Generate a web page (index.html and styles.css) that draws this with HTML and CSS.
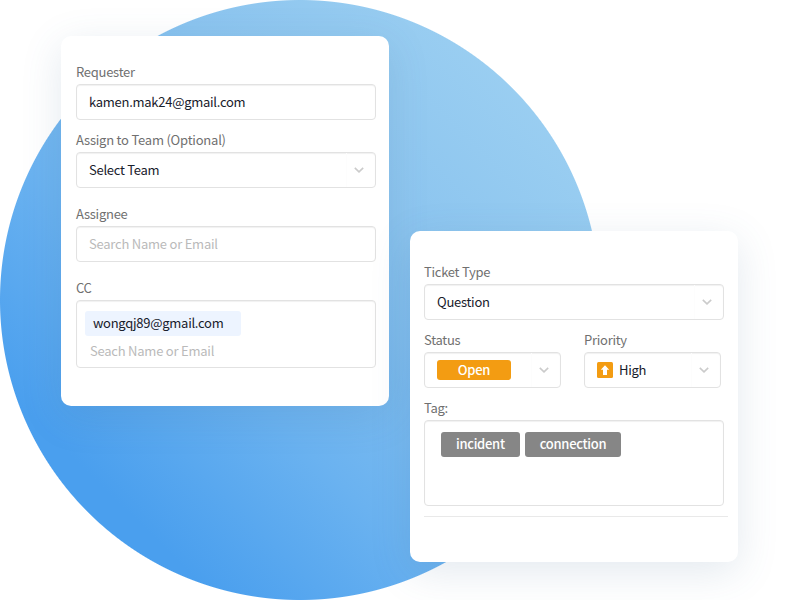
FILE: index.html
```html
<!DOCTYPE html>
<html lang="en">
<head>
<meta charset="utf-8">
<title>Ticket form</title>
<link rel="stylesheet" href="styles.css">
</head>
<body>
<main class="scene">
  <section class="card requester-card">
    <div class="group">
      <div class="label"><span>Requester</span></div>
      <div class="field"><span class="value">kamen.mak24@gmail.com</span></div>
    </div>
    <div class="group">
      <div class="label wide"><span>Assign to Team (Optional)</span></div>
      <div class="field"><span class="value">Select Team</span>
        <span class="toggle"><svg class="chevron" viewBox="0 0 10 6"><path d="M.8.8 5 4.8 9.200.8"/></svg></span></div>
    </div>
    <div class="group spaced">
      <div class="label"><span>Assignee</span></div>
      <div class="field"><span class="placeholder">Search Name or Email</span></div>
    </div>
    <div class="group spaced">
      <div class="label"><span>CC</span></div>
      <div class="field cc-field">
        <span class="recipient">wongqj89@gmail.com</span>
        <span class="placeholder">Seach Name or Email</span>
      </div>
    </div>
  </section>
  <section class="card ticket-card">
    <div class="group">
      <div class="label"><span>Ticket Type</span></div>
      <div class="field"><span class="value">Question</span>
        <span class="toggle"><svg class="chevron" viewBox="0 0 10 6"><path d="M.8.8 5 4.8 9.200.8"/></svg></span></div>
    </div>
    <div class="row">
      <div class="group">
        <div class="label"><span>Status</span></div>
        <div class="field"><span class="status">Open</span>
          <span class="toggle"><svg class="chevron" viewBox="0 0 10 6"><path d="M.8.8 5 4.8 9.200.8"/></svg></span></div>
      </div>
      <div class="group">
        <div class="label"><span>Priority</span></div>
        <div class="field">
          <svg class="priority-icon" viewBox="0 0 16 16"><rect width="16" height="16" rx="1.5" fill="#f39c12"/><path d="M8 3.200 12.200 7.800H10V13H6V7.800H3.800Z" fill="#fff"/></svg>
          <span class="value">High</span>
          <span class="toggle"><svg class="chevron" viewBox="0 0 10 6"><path d="M.8.8 5 4.8 9.200.8"/></svg></span></div>
      </div>
    </div>
    <div class="group">
      <div class="label"><span>Tag:</span></div>
      <div class="field tag-field"><span class="tag">incident</span><span class="tag">connection</span></div>
    </div>
    <hr class="divider">
  </section>
</main>
</body>
</html>
```
FILE: styles.css
```css
* { box-sizing: border-box; }

body {
  margin: 0;
  background: #fff;
  font-family: "Noto Sans CJK SC", "Open Sans", sans-serif;
  font-size: 13px;
  letter-spacing: -0.27px;
  color: #18202b;
}

.scene {
  width: 800px;
  height: 600px;
  overflow: hidden;
  display: flex;
  align-items: flex-start;
  gap: 21px;
  padding: 36px 0 0 61px;
  background: radial-gradient(circle at 300px 300px, transparent 299.5px, #fff 300.5px),
    linear-gradient(45deg, #4a9fee 18%, #6ab2f0 38%, #8bc4ef 64%, #9acef1 86%) 0 0 / 600px 600px no-repeat;
}

.card {
  width: 328px;
  background: #fff;
  border-radius: 10px;
  box-shadow: 0 10px 40px rgba(70, 110, 145, 0.15);
}

.requester-card { height: 370px; padding: 24px 13px 0 15px; }
.ticket-card { height: 331px; margin-top: 195px; padding: 29px 10px 0 14px; }

.group { width: 300px; margin-bottom: 8px; }
.group.spaced { margin-top: 14px; }

.label { height: 24px; line-height: 24px; color: #707070; white-space: nowrap; }
.label.wide { letter-spacing: -0.22px; }

.field {
  display: flex;
  align-items: center;
  height: 36px;
  padding-left: 12px;
  border: 1px solid #e2e2e2;
  border-radius: 4px;
  box-shadow: inset 0 1px 1px rgba(0, 0, 0, 0.06);
  line-height: 20px;
  white-space: nowrap;
}

.placeholder { color: #bababa; letter-spacing: -0.23px; }

.toggle {
  display: flex;
  align-items: center;
  width: 29px;
  height: 34px;
  margin-left: auto;
  padding-left: 7px;
  border-left: 1px solid #fdfdfd;
}

.chevron { width: 10px; height: 6px; fill: none; stroke: #cbcbcb; stroke-width: 1.6; }

.cc-field { height: 68px; padding: 10px 0 0 8px; flex-direction: column; align-items: flex-start; }
.recipient { width: 156px; height: 25px; padding-left: 8px; line-height: 24px; border-radius: 3px; background: #edf4ff; }
.cc-field .placeholder { margin: 5px 0 0 5px; }

.row { display: flex; gap: 23px; }
.row .group { width: 137px; }

.status { width: 74px; height: 20px; border-radius: 3px; background: #f39c12; color: #fff; font-weight: 500; text-align: center; }
.priority-icon { width: 16px; height: 16px; margin-right: 6px; }

.tag-field { height: 86px; align-items: flex-start; gap: 5px; padding: 11px 0 0 16px; }
.tag { height: 25px; padding: 0 15px; border-radius: 3px; background: #868686; color: #fff; font-weight: 500; line-height: 24px; letter-spacing: -0.3px; }

.divider { width: 304px; height: 1px; margin: 10px 0 0; border: 0; background: #e9e9e9; }
```
